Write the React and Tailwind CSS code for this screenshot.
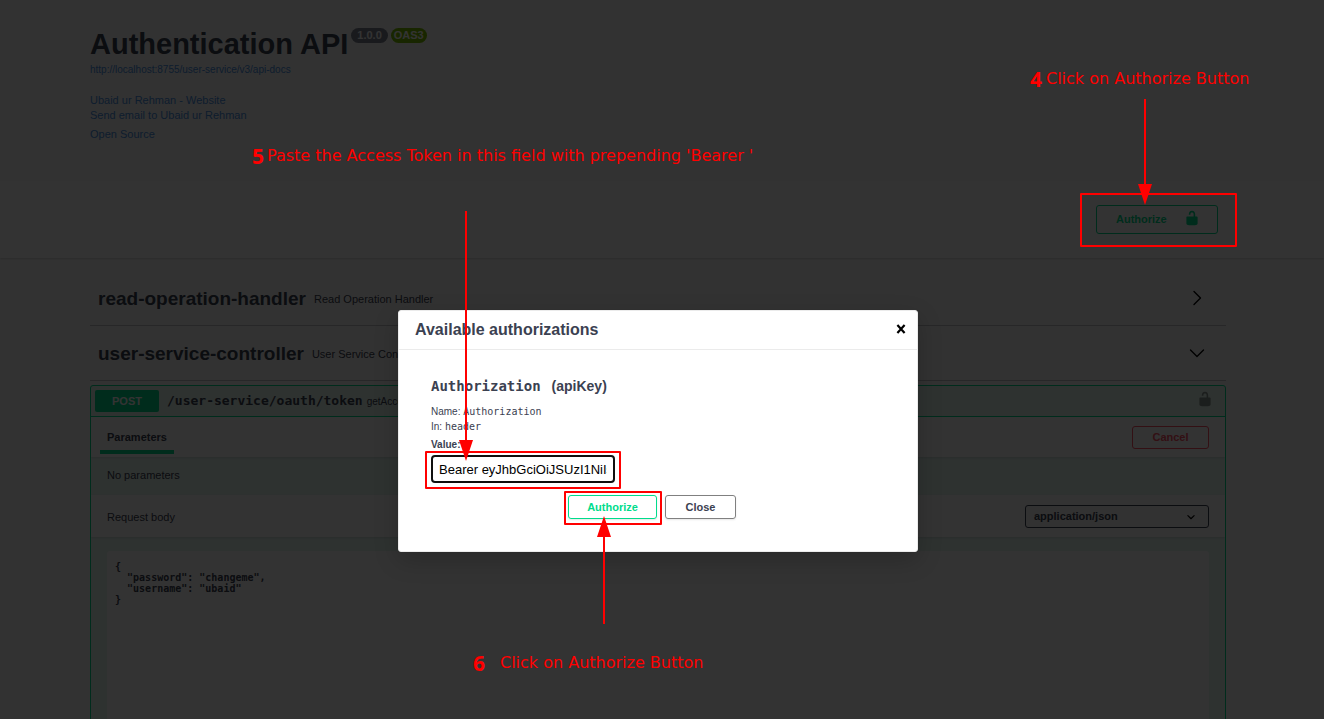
const SANS = "font-['Liberation_Sans',Arial,sans-serif]";
const MONO = "font-['DejaVu_Sans_Mono',monospace]";

function Unlock({ className }) {
  return (
    <svg viewBox="0 0 20 20" className={className} fill="currentColor" aria-hidden="true">
      <path d="M15.8 8H14V5.6C14 2.703 12.665 1 10 1 7.334 1 6 2.703 6 5.6V6h2v-.801C8 3.754 8.797 3 10 3c1.203 0 2 .754 2 2.199V8H4c-.553 0-1 .646-1 1.199V17c0 .549.428 1.139.951 1.307l1.197.387C5.672 18.861 6.55 19 7.1 19h5.8c.549 0 1.428-.139 1.951-.307l1.196-.387c.524-.167.953-.757.953-1.306V9.199C17 8.646 16.352 8 15.8 8z" />
    </svg>
  );
}

function Tag({ name, description, open }) {
  return (
    <div className="flex h-[55px] items-center border-b border-[#3b4151]/30 px-2">
      <h3 className="flex items-center gap-2 pt-[3px] text-[19px] font-bold text-[#3b4151]">
        {name}
        <small className="text-[11px] font-normal">{description}</small>
      </h3>
      <button type="button" aria-label={`Toggle ${name}`} className="mr-[13px] ml-auto">
        <svg viewBox="0 0 16 16" className="size-4" fill="none" stroke="#000" strokeWidth="1.4" strokeLinecap="round" strokeLinejoin="round">
          <path d={open ? "M1.5 5 8 11.5 14.5 5" : "M5 1.5 11.5 8 5 14.5"} />
        </svg>
      </button>
    </div>
  );
}

function ApiPage() {
  return (
    <div className={`h-full bg-[#fafafa] pr-2 text-[#3b4151] ${SANS}`}>
      <div className="mx-auto max-w-[1168px] px-4 pt-[27px]">
        <div className="flex items-start gap-[3px]">
          <h1 className="text-[29px] leading-[34px] font-bold">Authentication API</h1>
          <span className="mt-px rounded-full bg-[#7d8492] px-[6px] text-[11px] leading-[15px] font-bold text-white">1.0.0</span>
          <span className="mt-px rounded-full bg-[#7abf00] px-[3px] text-[11px] leading-[15px] font-bold text-white">OAS3</span>
        </div>
        <a href="#docs" className="block text-[10px] leading-[18px] text-[#4990e2]">
          http://localhost:8755/user-service/v3/api-docs
        </a>
        <div className="mt-[14px] flex flex-col items-start text-[11px] leading-[15px] text-[#4990e2]">
          <a href="#website">Ubaid ur Rehman - Website</a>
          <a href="#email">Send email to Ubaid ur Rehman</a>
          <a href="#license" className="mt-1">Open Source</a>
        </div>
      </div>

      <div className="mt-[39px] -mr-2 bg-white py-6 pr-2 shadow-[0_1px_2px_rgba(0,0,0,0.15)]">
        <div className="mx-auto flex max-w-[1168px] justify-end px-6">
          <button type="button" className="flex h-[29px] w-[122px] items-center justify-between rounded-[3px] border border-[#00dc8c] pr-[17px] pl-[19px] text-[11px] font-bold text-[#00dc8c]">
            Authorize
            <Unlock className="mb-1 size-4" />
          </button>
        </div>
      </div>

      <div className="mx-auto flex max-w-[1168px] flex-col px-4 pt-[13px]">
        <Tag name="read-operation-handler" description="Read Operation Handler" />
        <Tag name="user-service-controller" description="User Service Controller" open />

        <section className="mt-1 rounded-[3px] border border-[#00dc8c] bg-[#e4f7f0]">
          <div className="flex h-[31px] items-center border-b border-[#00dc8c] px-1">
            <span className="w-16 rounded-[2px] bg-[#00dc8c] text-center text-[11px] leading-[22px] font-bold text-white">POST</span>
            <span className={`ml-2 text-[13px] font-bold ${MONO}`}>/user-service/oauth/token</span>
            <span className="ml-1 text-[10px]">getAccessToken</span>
            <button type="button" aria-label="authorization button unlocked" className="mr-2 mb-1 ml-auto text-black/40">
              <Unlock className="size-4" />
            </button>
          </div>
          <div className="flex h-10 items-center justify-between bg-white pr-4 pl-[9px] shadow-[0_1px_2px_rgba(0,0,0,0.1)]">
            <h4 className="mb-[3px] self-stretch border-b-4 border-[#00dc8c] px-[7px] text-[11px] leading-10 font-bold">Parameters</h4>
            <button type="button" className="h-[23px] w-[77px] rounded-[3px] border border-[#ff5064] text-[11px] font-bold text-[#ff5064]">Cancel</button>
          </div>
          <p className="px-4 pb-[2px] text-[11px] leading-[36px]">No parameters</p>
          <div className="flex h-[42px] items-center justify-between bg-white px-4 text-[11px] shadow-[0_1px_2px_rgba(0,0,0,0.1)]">
            <label htmlFor="media" className="pt-[2px]">Request body</label>
            <div className="relative flex">
              <select id="media" className="h-[23px] w-[184px] appearance-none rounded-[3px] border border-[#3b4151] bg-[#f7f7f7] px-2 text-[11px] font-bold">
                <option>application/json</option>
              </select>
              <svg viewBox="0 0 20 20" className="pointer-events-none absolute top-1 right-[10px] size-4" fill="#000" aria-hidden="true">
                <path d="M13.418 7.859a.695.695 0 0 1 .978 0 .68.68 0 0 1 0 .969l-3.908 3.83a.697.697 0 0 1-.979 0l-3.908-3.83a.68.68 0 0 1 0-.969.695.695 0 0 1 .978 0L10 11l3.418-3.141z" />
              </svg>
            </div>
          </div>
          <div className="px-4 pt-[14px]">
            <textarea
              aria-label="Request body content"
              className={`block h-[320px] w-full resize-none rounded-[3px] bg-white px-2 py-[10px] text-[10px] leading-[11px] font-bold ${MONO}`}
              defaultValue={'{\n  "password": "changeme",\n  "username": "ubaid"\n}'}
            />
          </div>
        </section>
      </div>
    </div>
  );
}

function AuthDialog() {
  return (
    <div role="dialog" aria-label="Available authorizations" className={`w-[520px] rounded-[3px] border border-[#ebebeb] bg-white text-[#3b4151] shadow-[0_8px_24px_rgba(0,0,0,0.2)] ${SANS}`}>
      <header className="flex h-[39px] items-center justify-between border-b border-[#ebebeb] pr-2 pl-4">
        <h3 className="text-[16px] font-bold">Available authorizations</h3>
        <button type="button" aria-label="Close dialog" className="flex size-4 items-center justify-center pb-[2px]">
          <svg viewBox="0 0 10 10" className="size-[10px]" stroke="#000" strokeWidth="2.2" fill="none">
            <path d="M1.4 1 8.6 9M8.6 1 1.4 9" />
          </svg>
        </button>
      </header>
      <form className="px-8 pt-[27px] pb-8" onSubmit={(e) => e.preventDefault()}>
        <h4 className="text-[14px] leading-[18px] font-bold">
          <code className={`mr-[11px] ${MONO}`}>Authorization</code>(apiKey)
        </h4>
        <p className="mt-[9px] text-[10px] leading-[15px]">
          Name: <code className={MONO}>Authorization</code>
        </p>
        <p className="text-[10px] leading-[15px]">
          In: <code className={MONO}>header</code>
        </p>
        <label htmlFor="token" className="mt-[3px] block text-[10px] leading-[15px] font-bold">Value:</label>
        <input
          id="token"
          defaultValue="Bearer eyJhbGciOiJSUzI1NiIsInR5cCI6"
          className="mt-[3px] block h-7 w-[184px] rounded-[4px] border-2 border-[#101010] bg-white px-[6px] text-[13px] text-black outline-none"
        />
        <div className="mt-3 flex justify-center gap-2 pr-3 text-[11px] font-bold">
          <button type="submit" className="h-6 w-[89px] rounded-[3px] border border-[#00dc8c] text-[#00dc8c] shadow-[0_1px_2px_rgba(0,0,0,0.1)]">Authorize</button>
          <button type="button" className="h-6 w-[71px] rounded-[3px] border border-[#808080] shadow-[0_1px_2px_rgba(0,0,0,0.1)]">Close</button>
        </div>
      </form>
    </div>
  );
}

function Note({ number, children, className }) {
  return (
    <p className={`absolute flex items-center text-[16px] leading-5 whitespace-nowrap text-[#ff0000] font-['DejaVu_Sans',sans-serif] ${className}`}>
      <b className="w-3 font-['Noto_Sans',sans-serif] text-[21px]">{number}</b>
      {children}
    </p>
  );
}

function Pointer({ className, up }) {
  return (
    <svg className={`absolute w-[14px] ${className}`} fill="none" aria-hidden="true">
      {up ? (
        <>
          <path d="M7 10V108" stroke="#ff0000" strokeWidth="2" />
          <path d="M7 0 14 21H0z" fill="#ff0000" />
        </>
      ) : (
        <>
          <rect x="6" width="2" height="calc(100% - 15px)" fill="#ff0000" />
          <svg y="100%" overflow="visible">
            <path d="M0-21H14L7 0z" fill="#ff0000" />
          </svg>
        </>
      )}
    </svg>
  );
}

export default function App() {
  return (
    <main className="relative h-screen overflow-hidden">
      <ApiPage />
      <div className="absolute inset-0 flex items-start justify-center bg-black/80 pt-[310px] pr-2">
        <AuthDialog />
      </div>

      <Note number="4" className="top-[69px] left-[1030px] gap-1">Click on Authorize Button</Note>
      <Note number="5" className="top-[146px] left-[252px] gap-[3px]">Paste the Access Token in this field with prepending 'Bearer '</Note>
      <Note number="6" className="top-[653px] left-[473px] gap-[15px]">Click on Authorize Button</Note>

      <div className="absolute top-[193px] left-[1080px] h-[54px] w-[157px] rounded-[1px] border-2 border-[#ff0000]" />
      <div className="absolute top-[451px] left-[425px] h-[38px] w-[196px] rounded-[1px] border-2 border-[#ff0000]" />
      <div className="absolute top-[491px] left-[564px] h-[34px] w-[98px] rounded-[1px] border-2 border-[#ff0000]" />

      <Pointer className="top-[99px] left-[1138px] h-[106px]" />
      <Pointer className="top-[211px] left-[459px] h-[250px]" />
      <Pointer up className="top-[516px] left-[597px] h-[108px]" />
    </main>
  );
}
